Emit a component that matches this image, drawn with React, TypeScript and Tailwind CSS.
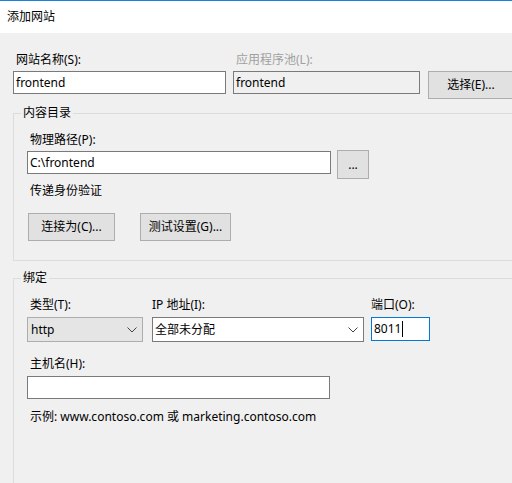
import React from "react";

const font = "font-['Noto_Sans','Noto_Sans_CJK_SC',sans-serif]";

function Chevron() {
  return (
    <svg width="10" height="6" viewBox="0 0 10 6" className="shrink-0">
      <polyline points="0.5,0.5 5,5 9.5,0.5" fill="none" stroke="#444" strokeWidth="1" />
    </svg>
  );
}

function Button({ label, className = "" }: { label: string; className?: string }) {
  return (
    <div
      className={`shrink-0 h-[28px] bg-[#e1e1e1] border border-[#adadad] flex items-center justify-center box-border ${className}`}
    >
      {label}
    </div>
  );
}

function Group({ title, className = "", children }: { title: string; className?: string; children: React.ReactNode }) {
  return (
    <div className={`relative border border-[#dcdcdc] box-border ${className}`}>
      <span className="absolute -top-[9px] left-[7px] px-[2px] bg-[#f0f0f0] leading-[16px]">{title}</span>
      {children}
    </div>
  );
}

export default function App() {
  return (
    <div className={`w-[512px] h-[483px] overflow-hidden bg-[#f0f0f0] text-[12px] text-black ${font}`}>
      {/* Title bar */}
      <div className="h-[33px] bg-white border-t border-[#1883d7] box-border pl-[7px] flex items-center">
        添加网站
      </div>

      <div className="pl-[13px] pt-[19px]">
        {/* Site name / app pool */}
        <div className="flex items-start h-[42px]">
          <div className="shrink-0 w-[213px]">
            <div className="pl-[3px] h-[19px] leading-[16px]">网站名称(S):</div>
            <div className="h-[23px] bg-white border border-[#7a7a7a] box-border pl-[2px] flex items-center">frontend</div>
          </div>
          <div className="shrink-0 ml-[7px] w-[187px]">
            <div className="pl-[3px] h-[19px] leading-[16px] text-[#a0a0a0]">应用程序池(L):</div>
            <div className="h-[23px] bg-[#f0f0f0] border border-[#7a7a7a] box-border pl-[2px] flex items-center">frontend</div>
          </div>
          <div className="shrink-0 ml-[8px] pt-[19px]">
            <Button label="选择(E)..." className="w-[92px] pr-[6px]" />
          </div>
        </div>

        {/* Content directory */}
        <Group title="内容目录" className="mt-[19px] w-[520px] h-[148px]">
          <div className="pl-[13px] pt-[18px]">
            <div className="pl-[3px] h-[19px] leading-[16px]">物理路径(P):</div>
            <div className="flex items-start h-[23px]">
              <div className="shrink-0 w-[304px] h-[23px] bg-white border border-[#7a7a7a] box-border pl-[2px] flex items-center">
                C:\frontend
              </div>
              <Button label="..." className="ml-[6px] -mt-[1px] w-[32px] h-[29px]" />
            </div>
            <div className="pl-[3px] mt-[9px] leading-[16px]">传递身份验证</div>
            <div className="flex mt-[14px] pl-[1px]">
              <Button label="连接为(C)..." className="w-[87px]" />
              <Button label="测试设置(G)..." className="ml-[25px] w-[91px]" />
            </div>
          </div>
        </Group>

        {/* Bindings */}
        <Group title="绑定" className="mt-[17px] w-[520px] h-[260px]">
          <div className="pl-[13px] pt-[18px]">
            <div className="flex items-start">
              <div className="shrink-0 w-[116px]">
                <div className="pl-[3px] h-[20px] leading-[16px]">类型(T):</div>
                <div className="h-[25px] bg-[#e5e5e5] border border-[#adadad] box-border pl-[3px] pr-[5px] flex items-center justify-between">
                  <span>http</span>
                  <Chevron />
                </div>
              </div>
              <div className="shrink-0 ml-[9px] w-[212px]">
                <div className="h-[20px] leading-[16px]">IP 地址(I):</div>
                <div className="h-[25px] bg-white border border-[#7a7a7a] box-border pl-[2px] pr-[5px] flex items-center justify-between">
                  <span>全部未分配</span>
                  <Chevron />
                </div>
              </div>
              <div className="shrink-0 ml-[7px] w-[59px]">
                <div className="h-[20px] leading-[16px]">端口(O):</div>
                <div className="h-[24px] bg-white border border-[#0078d7] box-border pl-[2px] flex items-center">
                  <span>8011</span>
                  <span className="ml-[1px] w-px h-[16px] bg-black" />
                </div>
              </div>
            </div>

            <div className="pl-[3px] mt-[14px] h-[20px] leading-[16px]">主机名(H):</div>
            <div className="w-[303px] h-[23px] bg-white border border-[#7a7a7a] box-border" />
            <div className="pl-[3px] mt-[10px] leading-[16px]">示例: www.contoso.com 或 marketing.contoso.com</div>
          </div>
        </Group>
      </div>
    </div>
  );
}
